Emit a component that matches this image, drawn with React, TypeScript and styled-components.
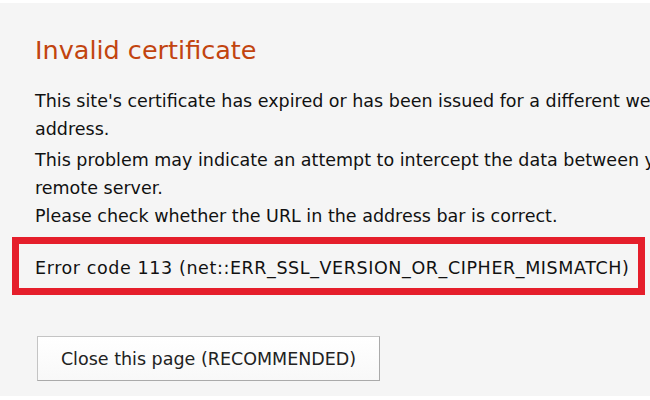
import styled, { createGlobalStyle } from "styled-components";

const Global = createGlobalStyle`
  html, body {
    margin: 0;
    padding: 0;
    background: #ffffff;
    overflow: hidden;
  }
`;

const Page = styled.div`
  width: 650px;
  height: 400px;
  padding-top: 3px;
  box-sizing: border-box;
  overflow: hidden;
`;

const Panel = styled.div`
  height: 393px;
  background: #f5f5f5;
  padding: 33px 0 0 35px;
  box-sizing: border-box;
  overflow: hidden;
  font-family: "DejaVu Sans", sans-serif;
  color: #111;
`;

const Title = styled.h1`
  margin: 0 0 23px;
  font-size: 25.5px;
  font-weight: normal;
  line-height: 28px;
  color: #c2440f;
`;

const Paragraph = styled.div`
  & + & {
    margin-top: 3px;
  }
`;

const Text = styled.div`
  font-size: 17.5px;
  line-height: 28px;
  white-space: nowrap;
`;

const ErrorBox = styled.div`
  display: inline-block;
  margin: 7px 0 0 -23px;
  padding: 10px 8px 6px 16px;
  border: 7px solid #e51e2b;
  font-size: 17.5px;
  line-height: 28px;
  letter-spacing: 0.6px;
  white-space: nowrap;
`;

const Button = styled.button`
  display: block;
  margin: 41px 0 0 2px;
  width: 343px;
  height: 45px;
  padding: 0;
  border: 1px solid #c4c4c4;
  border-right-color: #aaa;
  border-bottom-color: #aaa;
  background: linear-gradient(#ffffff, #f8f8f8);
  font-family: inherit;
  font-size: 17.5px;
  color: #222;
`;

const paragraphs = [
  [
    "This site's certificate has expired or has been issued for a different web",
    "address.",
  ],
  [
    "This problem may indicate an attempt to intercept the data between your computer and the",
    "remote server.",
    "Please check whether the URL in the address bar is correct.",
  ],
];

const App = () => {
  return (
    <Page>
      <Global />
      <Panel>
        <Title>Invalid certificate</Title>
        {paragraphs.map((p, i) => (
          <Paragraph key={i}>
            {p.map((l, j) => (
              <Text key={j}>{l}</Text>
            ))}
          </Paragraph>
        ))}
        <ErrorBox>Error code 113 (net::ERR_SSL_VERSION_OR_CIPHER_MISMATCH)</ErrorBox>
        <Button>Close this page (RECOMMENDED)</Button>
      </Panel>
    </Page>
  );
};

export default App;
